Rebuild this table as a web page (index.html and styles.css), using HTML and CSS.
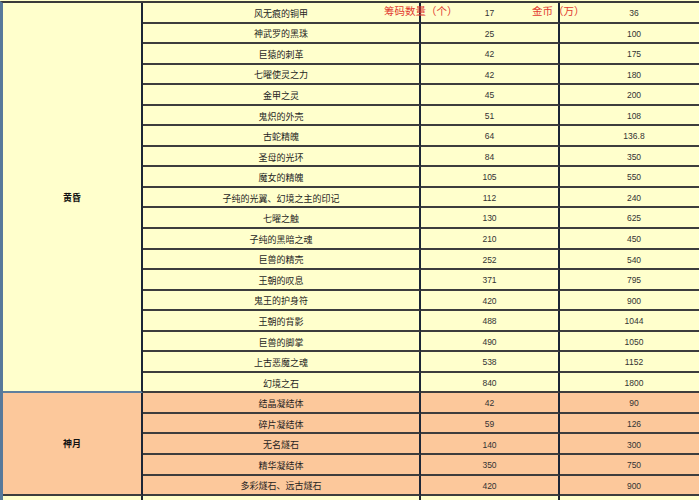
FILE: index.html
```html
<!DOCTYPE html>
<html lang="zh-CN">
<head>
<meta charset="utf-8">
<title>筹码兑换表</title>
<link rel="stylesheet" href="styles.css">
</head>
<body>
<div class="sheet">
  <table class="grid">
    <colgroup>
      <col class="w1"><col class="w2"><col class="w3"><col class="w4">
    </colgroup>
    <tbody class="dusk">
      <tr><td class="group" rowspan="19">黄昏</td><td class="name">风无痕的铜甲</td><td class="num">17</td><td class="num">36</td></tr>
      <tr><td class="name">神武罗的黑珠</td><td class="num">25</td><td class="num">100</td></tr>
      <tr><td class="name">巨猿的刺革</td><td class="num">42</td><td class="num">175</td></tr>
      <tr><td class="name">七曜使灵之力</td><td class="num">42</td><td class="num">180</td></tr>
      <tr><td class="name">金甲之灵</td><td class="num">45</td><td class="num">200</td></tr>
      <tr><td class="name">鬼炽的外壳</td><td class="num">51</td><td class="num">108</td></tr>
      <tr><td class="name">古蛇精魄</td><td class="num">64</td><td class="num">136.8</td></tr>
      <tr><td class="name">圣母的光环</td><td class="num">84</td><td class="num">350</td></tr>
      <tr><td class="name">魔女的精魄</td><td class="num">105</td><td class="num">550</td></tr>
      <tr><td class="name">子纯的光翼、幻境之主的印记</td><td class="num">112</td><td class="num">240</td></tr>
      <tr><td class="name">七曜之触</td><td class="num">130</td><td class="num">625</td></tr>
      <tr><td class="name">子纯的黑暗之魂</td><td class="num">210</td><td class="num">450</td></tr>
      <tr><td class="name">巨兽的精壳</td><td class="num">252</td><td class="num">540</td></tr>
      <tr><td class="name">王朝的叹息</td><td class="num">371</td><td class="num">795</td></tr>
      <tr><td class="name">鬼王的护身符</td><td class="num">420</td><td class="num">900</td></tr>
      <tr><td class="name">王朝的背影</td><td class="num">488</td><td class="num">1044</td></tr>
      <tr><td class="name">巨兽的脚掌</td><td class="num">490</td><td class="num">1050</td></tr>
      <tr><td class="name">上古恶魔之魂</td><td class="num">538</td><td class="num">1152</td></tr>
      <tr><td class="name">幻境之石</td><td class="num">840</td><td class="num">1800</td></tr>
    </tbody>
    <tbody class="moon">
      <tr><td class="group" rowspan="5">神月</td><td class="name">结晶凝结体</td><td class="num">42</td><td class="num">90</td></tr>
      <tr><td class="name">碎片凝结体</td><td class="num">59</td><td class="num">126</td></tr>
      <tr><td class="name">无名燧石</td><td class="num">140</td><td class="num">300</td></tr>
      <tr><td class="name">精华凝结体</td><td class="num">350</td><td class="num">750</td></tr>
      <tr><td class="name">多彩燧石、远古燧石</td><td class="num">420</td><td class="num">900</td></tr>
    </tbody>
    <tbody class="next">
      <tr><td class="group"></td><td class="name"></td><td class="num"></td><td class="num"></td></tr>
    </tbody>
  </table>
  <span class="label label-count">筹码数量（个）</span>
  <span class="label label-gold">金币（万）</span>
</div>
</body>
</html>
```

FILE: styles.css
```css
html, body {
  margin: 0;
  padding: 0;
}
body {
  background: #ffffcc;
  overflow: hidden;
  width: 699px;
  height: 500px;
}
.sheet {
  position: relative;
  padding-top: 1px;
}
.grid {
  table-layout: fixed;
  width: 710px;
  border-collapse: separate;
  border-spacing: 0;
  border-top: 2px solid #3a3a3a;
  border-left: 3px solid #57799a;
}
.w1 { width: 140px; }
.w2 { width: 278px; }
.w3 { width: 139px; }
.w4 { width: 150px; }
.grid tr {
  height: 20.55px;
}
.grid td {
  box-sizing: border-box;
  padding: 0;
  text-align: center;
  vertical-align: middle;
  border-right: 2px solid #1c2636;
  border-bottom: 2px solid #3d3d3d;
  line-height: 1;
  white-space: nowrap;
}
.dusk td, .next td { background: #ffffcc; }
.moon td { background: #fcc89b; }
.dusk .group { border-bottom-color: #5e7f9e; }
.group {
  font-family: "Noto Sans CJK SC", "DejaVu Sans", sans-serif;
  font-size: 9px;
  color: #111;
  font-weight: 700;
}
.name {
  font-family: "Noto Sans CJK SC", "DejaVu Sans", sans-serif;
  font-size: 9px;
  color: #1e1e1e;
  padding-top: 2px !important;
}
.num {
  font-family: "Liberation Sans", Arial, sans-serif;
  font-size: 8.5px;
  color: #333;
  padding-top: 2px !important;
}
.label {
  position: absolute;
  top: 5px;
  font-family: "Noto Sans CJK SC", "DejaVu Sans", sans-serif;
  font-size: 10.5px;
  line-height: 12px;
  color: #e2392f;
}
.label-count { left: 384px; }
.label-gold { left: 532px; }
```
